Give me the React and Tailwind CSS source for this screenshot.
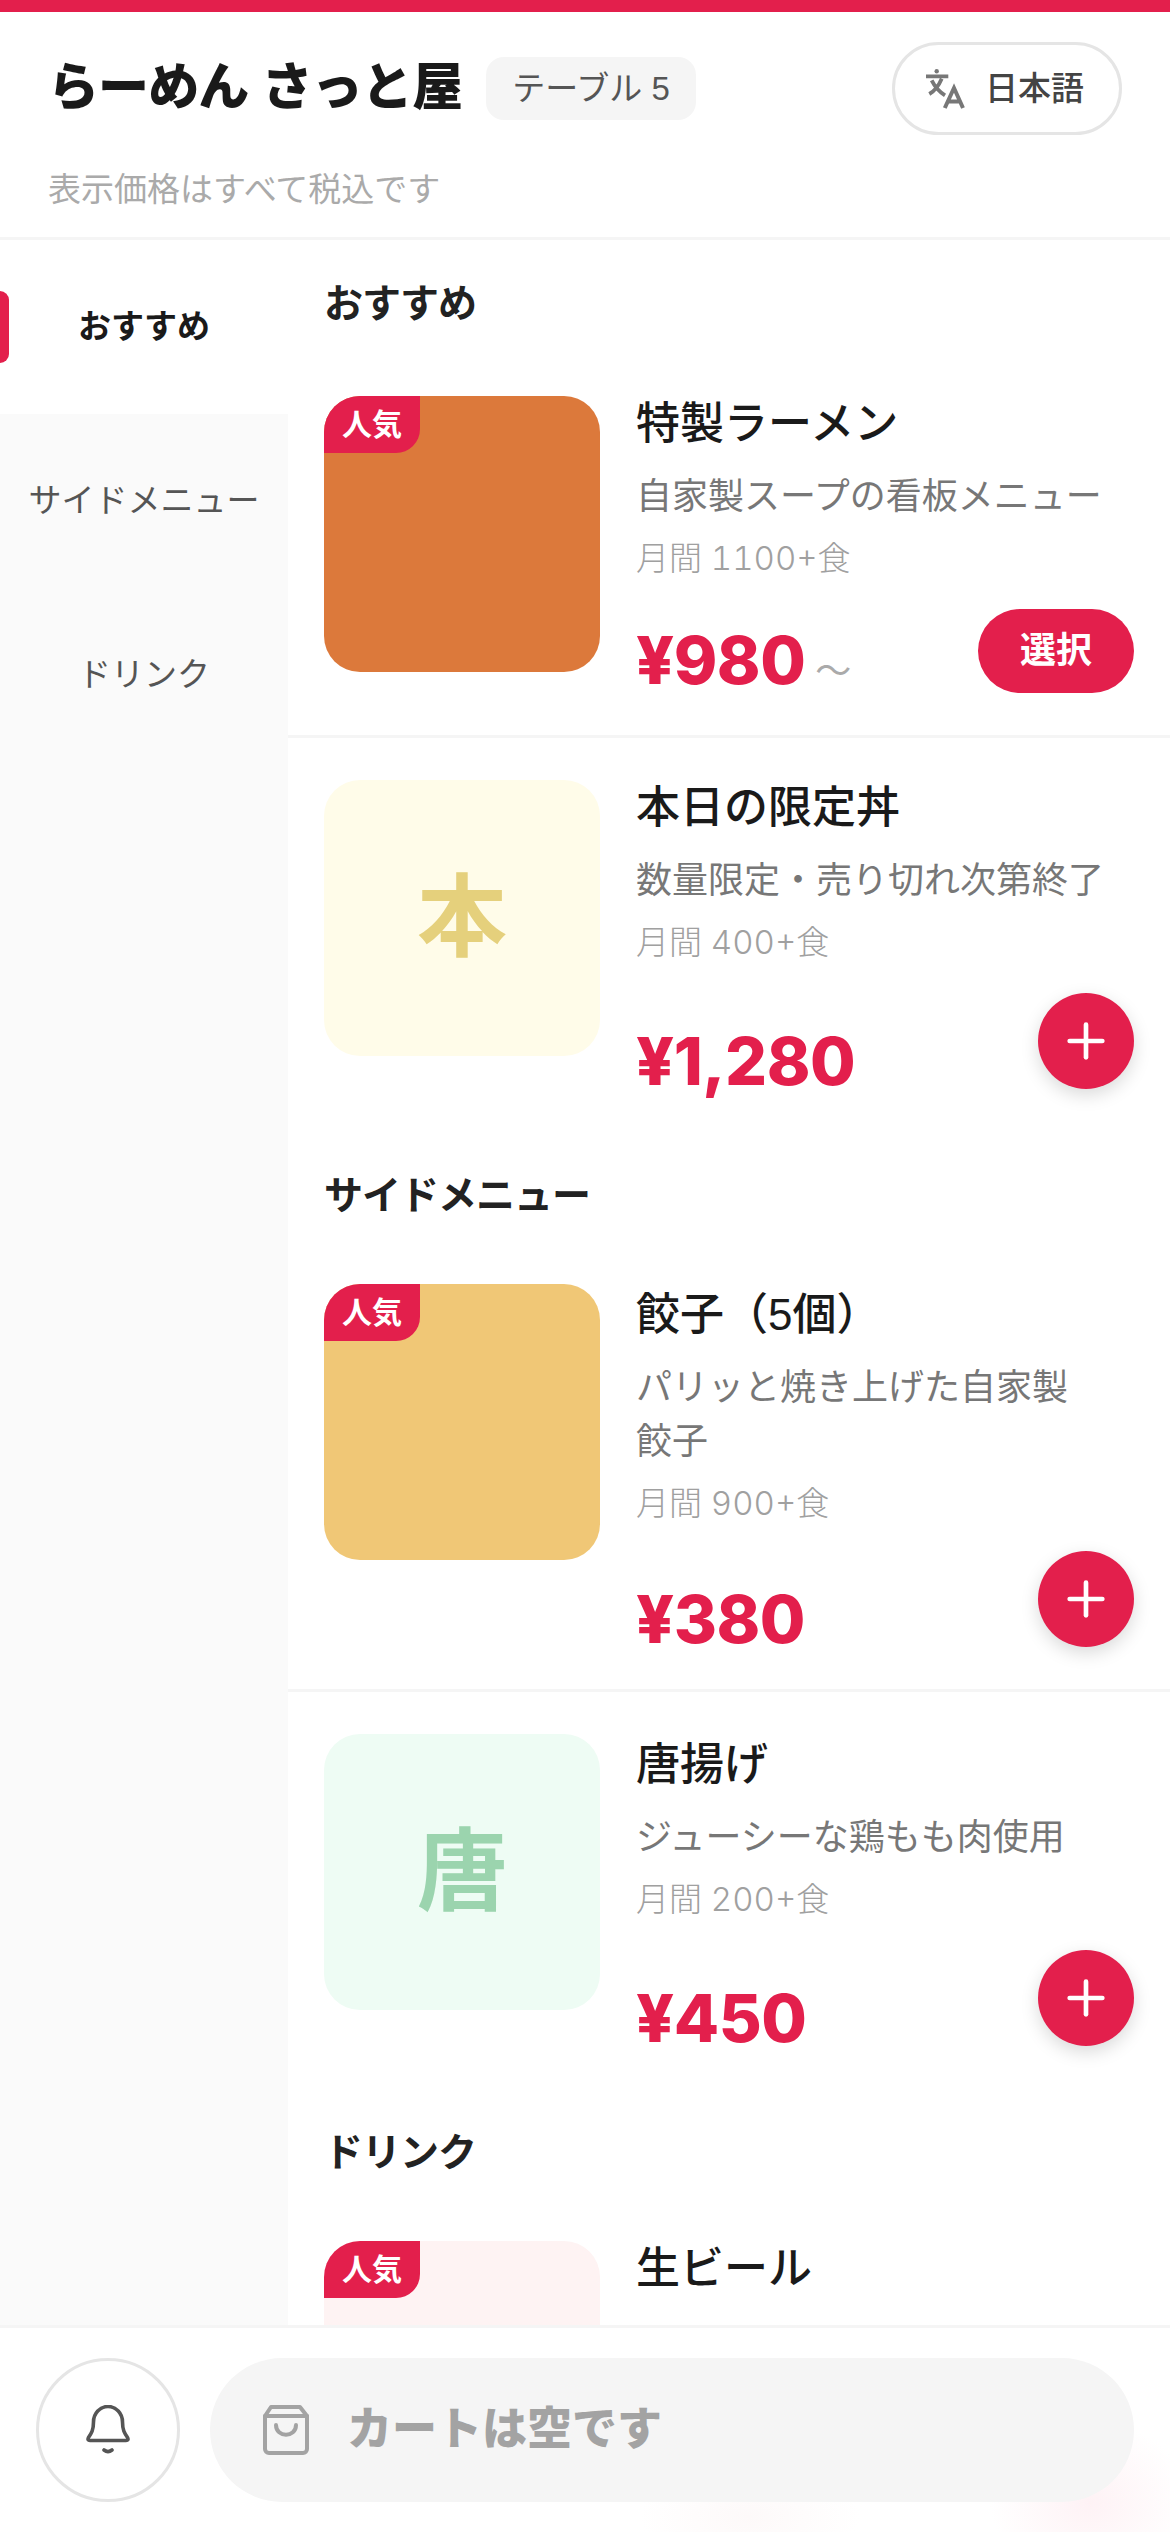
import { Plus } from 'lucide-react';

const RED = 'bg-[#e31f4c]';

const Translate = () => (
    <svg width="40" height="42" viewBox="0 0 40 42" fill="none" stroke="#777" strokeWidth="3.8" className="shrink-0">
        <path d="M0 8.3H22.3M15.7 10.7C13 17 8.5 23 3.3 26M5.7 12.3C8.5 18 13 23.5 19 27.3" />
        <path d="M18.8 40 28 20 37 40M22 33.5H34" strokeWidth="4" />
        <circle cx="10.7" cy="3.3" r="2.2" fill="#777" stroke="none" />
    </svg>
);

const Bell = () => (
    <svg width="44" height="50" viewBox="0 0 44 50" fill="none" stroke="#555" strokeWidth="3.6" strokeLinejoin="round" strokeLinecap="round">
        <path d="M7.5 17a14.5 15.5 0 0 1 29 0c0 8 2 11 5 15.5q1.5 3-1.5 3H4q-3 0-1.500-3C5.500 28 7.500 25 7.500 17Z" />
        <path d="M18 45q4 3.200 8 0" />
    </svg>
);

const Bag = () => (
    <svg width="46" height="50" viewBox="0 0 46 50" fill="none" stroke="#a3a3a3" strokeWidth="4" strokeLinejoin="round" strokeLinecap="round">
        <path d="M8 2H37L44 11V44a4 4 0 0 1-4 4H6a4 4 0 0 1-4-4V11Z" />
        <path d="M2 11H44" />
        <path d="M13 20c0 13 20 13 20 0" />
    </svg>
);

function MenuCard({ item, last }) {
    return (
        <div className={`flex gap-[36px] pl-[36px] pr-[36px] pt-[42px] ${last ? 'pb-[39px]' : 'pb-[42px] border-b-[3px] border-[#f5f5f5]'}`}>
            <div className={`relative flex size-[276px] shrink-0 items-center justify-center overflow-hidden rounded-[36px] ${item.bg}`}>
                {item.popular && (
                    <span className={`absolute left-0 top-0 flex h-[57px] w-[96px] items-center justify-center rounded-br-[24px] text-[30px] font-bold text-white ${RED}`}>
                        人気
                    </span>
                )}
                {item.glyph && <span className={`text-[90px] font-bold ${item.glyphColor}`}>{item.glyph}</span>}
            </div>
            <div className={`min-w-0 flex-1 ${item.textOffset ? 'pt-[3px]' : ''}`}>
                <p className="text-[44px] leading-[56px] font-medium text-[#1a1a1a]">{item.name}</p>
                {item.price && (
                    <>
                        <p className="mt-[18px] text-[36px] leading-[54px] text-[#777]">
                            {item.desc}
                            {item.desc2 && <br />}
                            {item.desc2}
                        </p>
                        <p className="mt-[10px] font-['Inter','Noto_Sans_CJK_JP',sans-serif] text-[33px] leading-[48px] font-light text-[#a0a0a0] tabular-nums">{item.sold}</p>
                        <div className={`flex items-end justify-between ${item.desc2 ? 'mt-[24px]' : 'mt-[27px]'}`}>
                            <p className={`flex items-baseline font-['Inter'] text-[66px] leading-none font-extrabold tracking-[-0.5px] text-[#e31f4c] ${item.choose ? '' : '-mb-[5px]'}`}>
                                {item.price}
                                {item.choose && <span className="ml-[10px] font-['Noto_Sans_CJK_JP'] text-[36px] font-normal text-[#aaa]">〜</span>}
                            </p>
                            {item.choose ? (
                                <button className={`h-[84px] w-[156px] rounded-full text-[36px] font-bold text-white ${RED}`}>選択</button>
                            ) : (
                                <button className={`flex size-[96px] items-center justify-center rounded-full text-white shadow-[0_6px_18px_rgba(0,0,0,0.15)] ${RED}`}>
                                    <Plus size={56} strokeWidth={2} />
                                </button>
                            )}
                        </div>
                    </>
                )}
            </div>
        </div>
    );
}

const sections = [
    {
        title: 'おすすめ',
        head: 'pt-[37px] pb-[23px]',
        items: [
            { name: '特製ラーメン', desc: '自家製スープの看板メニュー', sold: '月間 1100+食', price: '¥980', popular: true, choose: true, bg: 'bg-[#dc793b]' },
            { name: '本日の限定丼', desc: '数量限定・売り切れ次第終了', sold: '月間 400+食', price: '¥1,280', bg: 'bg-[#fffce9]', glyph: '本', glyphColor: 'text-[#e5d07c]' },
        ],
    },
    {
        title: 'サイドメニュー',
        head: 'pt-[41px] pb-[19px]',
        items: [
            { name: '餃子（5個）', desc: 'パリッと焼き上げた自家製', desc2: '餃子', sold: '月間 900+食', price: '¥380', popular: true, bg: 'bg-[#f0c776]', textOffset: true },
            { name: '唐揚げ', desc: 'ジューシーな鶏もも肉使用', sold: '月間 200+食', price: '¥450', bg: 'bg-[#eefcf4]', glyph: '唐', glyphColor: 'text-[#9bd4ae]', textOffset: true },
        ],
    },
    {
        title: 'ドリンク',
        head: 'pt-[41px] pb-[19px]',
        items: [{ name: '生ビール', popular: true, bg: 'bg-[#fef3f3]' }],
    },
];

export default function App() {
    return (
        <div className="flex h-[2532px] flex-col overflow-hidden bg-white font-['Liberation_Sans','Noto_Sans_CJK_JP',sans-serif]">
            <div className={`h-[12px] shrink-0 ${RED}`} />
            <header className="shrink-0 border-b-[3px] border-[#f5f5f5] px-[48px] pt-[30px] pb-[23px]">
                <div className="flex items-center justify-between">
                    <div className="flex items-center gap-[24px]">
                        <h1 className="text-[51px] font-black tracking-[-0.9px] text-[#1a1a1a]">らーめん さっと屋</h1>
                        <span className="flex h-[63px] w-[210px] items-center justify-center rounded-[18px] bg-[#f5f5f5] text-[33px] text-[#555]">テーブル 5</span>
                    </div>
                    <button className="flex h-[93px] w-[230px] items-center gap-[19px] rounded-full border-[3px] border-[#e5e5e5] pl-[31px] text-[33px] font-medium text-[#444]">
                        <Translate />
                        日本語
                    </button>
                </div>
                <p className="mt-[31px] text-[33px] leading-[48px] text-[#aaa]">表示価格はすべて税込です</p>
            </header>

            <div className="flex min-h-0 flex-1">
                <nav className="w-[288px] shrink-0 bg-[#fafafa]">
                    <div className="relative flex h-[174px] items-center justify-center bg-white text-[33px] font-bold text-[#1a1a1a]">
                        <span className={`absolute left-0 top-[51px] h-[72px] w-[9px] rounded-r-[9px] ${RED}`} />
                        おすすめ
                    </div>
                    <div className="flex h-[174px] items-center justify-center text-[33px] text-[#555]">サイドメニュー</div>
                    <div className="flex h-[174px] items-center justify-center text-[33px] text-[#555]">ドリンク</div>
                </nav>
                <main className="min-w-0 flex-1 overflow-hidden">
                    {sections.map((section) => (
                        <section key={section.title}>
                            <h2 className={`px-[36px] text-[39px] leading-[54px] font-bold tracking-[-1px] text-[#222] ${section.head}`}>{section.title}</h2>
                            {section.items.map((item, i) => (
                                <MenuCard key={item.name} item={item} last={i === section.items.length - 1} />
                            ))}
                        </section>
                    ))}
                </main>
            </div>

            <footer className="relative flex shrink-0 items-center gap-[30px] overflow-hidden border-t-[3px] border-[#f5f5f5] bg-white px-[36px] py-[30px]">
                <span className="absolute -bottom-[40px] left-[640px] h-[110px] w-[220px] bg-[radial-gradient(closest-side,#fdf9f9,transparent)]" />
                <span className="absolute -bottom-[50px] right-[-20px] h-[160px] w-[200px] bg-[radial-gradient(closest-side,#fef2f5,transparent)]" />
                <button className="relative flex size-[144px] shrink-0 items-center justify-center rounded-full border-[3px] border-[#e5e5e5] bg-white">
                    <Bell />
                </button>
                <div className="relative flex h-[144px] flex-1 items-center gap-[38px] rounded-full bg-[#f5f5f5] pl-[53px] text-[45px] font-black text-[#a3a3a3]">
                    <Bag />
                    カートは空です
                </div>
            </footer>
        </div>
    );
}
